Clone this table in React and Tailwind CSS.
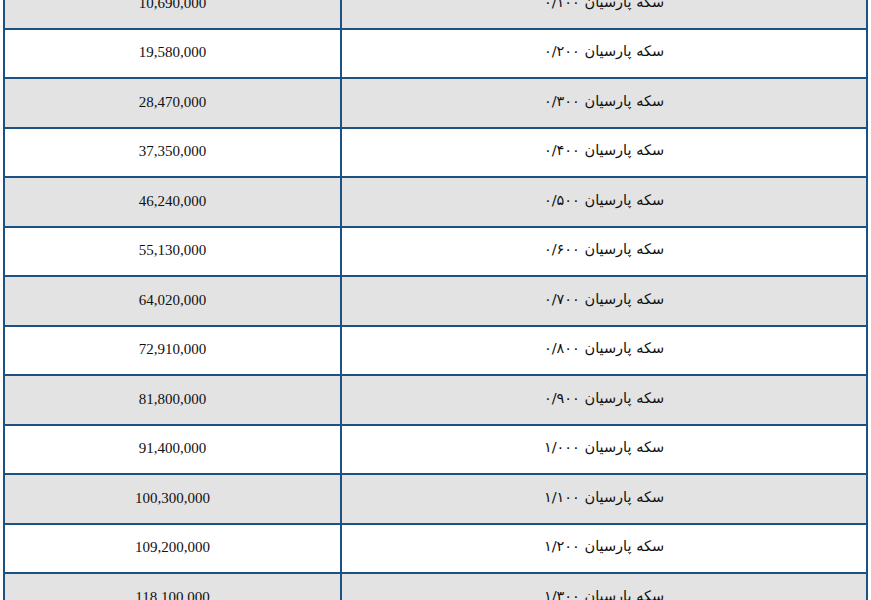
import React from "react";

const rows = [
  ["10,690,000", "۰/۱۰۰"],
  ["19,580,000", "۰/۲۰۰"],
  ["28,470,000", "۰/۳۰۰"],
  ["37,350,000", "۰/۴۰۰"],
  ["46,240,000", "۰/۵۰۰"],
  ["55,130,000", "۰/۶۰۰"],
  ["64,020,000", "۰/۷۰۰"],
  ["72,910,000", "۰/۸۰۰"],
  ["81,800,000", "۰/۹۰۰"],
  ["91,400,000", "۱/۰۰۰"],
  ["100,300,000", "۱/۱۰۰"],
  ["109,200,000", "۱/۲۰۰"],
  ["118,100,000", "۱/۳۰۰"],
];

export default function App() {
  return (
    <div className="w-[871px] h-[600px] overflow-hidden bg-white">
      <div className="ml-[3px] mt-[-20px] w-[865px] border-x-2 border-[#1b5282] flex flex-col">
        {rows.map(([price, label], i) => (
          <div
            key={i}
            className={`flex h-[49.5px] shrink-0 border-b-2 border-[#1b5282] ${
              i % 2 === 0 ? "bg-[#e3e3e3]" : "bg-white"
            }`}
          >
            <div className="w-[335px] shrink-0 flex items-center justify-center pb-[2px] text-[15px] text-[#111] font-['Liberation_Serif','Times_New_Roman',serif]">
              {price}
            </div>
            <div className="w-[2px] shrink-0 bg-[#1b5282]" />
            <div
              dir="rtl"
              className="flex-1 flex items-center justify-center pb-[2px] text-[14.5px] text-[#111] font-['DejaVu_Sans',sans-serif]"
            >
              سکه پارسیان {label}
            </div>
          </div>
        ))}
      </div>
    </div>
  );
}
